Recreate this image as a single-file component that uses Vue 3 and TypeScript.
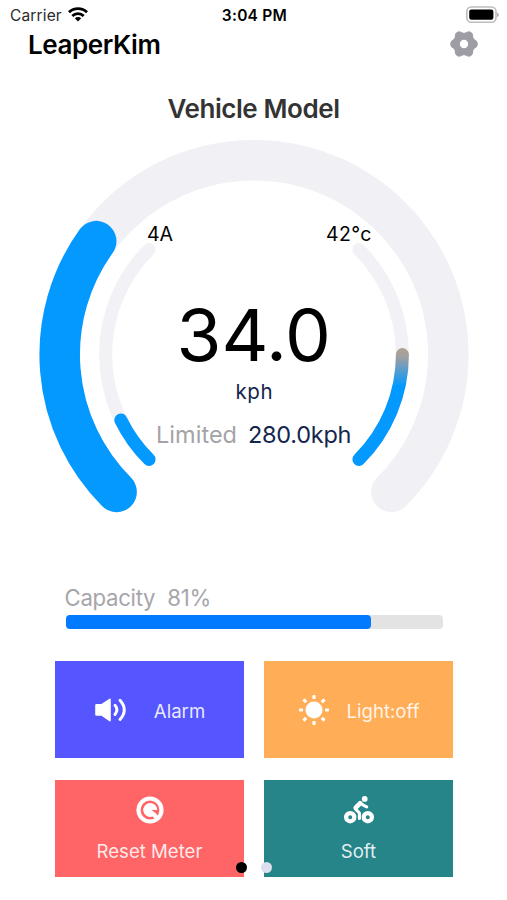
<script setup lang="ts">
interface Arc {
  from: number
  to: number
  radius: number
  stroke: string
  width: number
}

const cx = 254
const cy = 214.5

const capacity = 81

// Angles are in degrees, clockwise from the positive x axis.
function point(radius: number, deg: number): string {
  const a = (deg * Math.PI) / 180
  return `${(cx + radius * Math.cos(a)).toFixed(2)} ${(cy + radius * Math.sin(a)).toFixed(2)}`
}

function arcPath(arc: Arc): string {
  const large = arc.to - arc.from > 180 ? 1 : 0
  return `M${point(arc.radius, arc.from)}A${arc.radius} ${arc.radius} 0 ${large} 1 ${point(arc.radius, arc.to)}`
}

const arcs: Arc[] = [
  { from: 135, to: 405, radius: 194.3, stroke: '#f1f0f5', width: 40.5 },
  { from: 135, to: 215.7, radius: 194.3, stroke: '#0399ff', width: 40.5 },
  { from: 135, to: 225, radius: 148.4, stroke: '#f2f1f5', width: 13 },
  { from: 135, to: 153.8, radius: 148.4, stroke: '#0399ff', width: 13 },
  { from: -45, to: 45, radius: 148.4, stroke: '#f2f1f5', width: 13 },
  { from: 0, to: 45, radius: 148.4, stroke: 'url(#heat)', width: 13 },
]

const rays = [0, 45, 90, 135, 180, 225, 270, 315]
const teeth = [0, 60, 120, 180, 240, 300]
</script>

<template>
  <main class="screen">
    <div class="status">
      <div class="carrier">
        <span>Carrier</span>
        <svg class="wifi" viewBox="0 0 20 15" width="20" height="15">
          <g fill="none" stroke="#000" stroke-width="2.8">
            <path d="M1 5.3C6 .4 14 .4 19 5.3" />
            <path d="M4.3 8.9C7.5 5.8 12.5 5.8 15.7 8.9" />
          </g>
          <path d="M6.8 11.2Q10 8.6 13.2 11.2L10 14.6Z" fill="#000" />
        </svg>
      </div>
      <span class="clock">3:04 PM</span>
      <svg class="battery" viewBox="0 0 34 18" width="34" height="18">
        <rect x="1.8" y="1" width="29.2" height="15.2" rx="4.5" fill="#fff" stroke="#bdbdbd" stroke-width="1.6" />
        <rect x="4.2" y="3.4" width="24.2" height="10.4" rx="2.2" fill="#000" />
        <path d="M32.2 6.4Q33.8 7 33.8 8.7T32.2 11Z" fill="#a5a5a5" />
      </svg>
    </div>

    <header class="bar">
      <h1 class="brand">LeaperKim</h1>
      <svg class="gear" viewBox="-14 -14 28 28" width="28" height="28" fill="#9e9da5">
        <path
          fill-rule="evenodd"
          d="M-11.2 0a11.2 11.2 0 1 0 22.4 0a11.2 11.2 0 1 0 -22.4 0ZM-4.2 0a4.2 4.2 0 1 0 8.4 0a4.2 4.2 0 1 0 -8.4 0Z"
        />
        <path
          v-for="t in teeth"
          :key="t"
          d="M8 -6.2L12.2 -3.4Q13.8 -2.4 13.8 0T12.2 3.4L8 6.2Z"
          :transform="`rotate(${t})`"
        />
      </svg>
    </header>

    <h2 class="model">Vehicle Model</h2>

    <svg class="gauge" viewBox="0 0 507 380" width="507" height="380">
      <defs>
        <linearGradient id="heat" gradientUnits="userSpaceOnUse" x1="0" y1="209" x2="0" y2="246">
          <stop offset="0" stop-color="#b0a094" />
          <stop offset="0.2" stop-color="#a39f9f" />
          <stop offset="1" stop-color="#0399ff" />
        </linearGradient>
      </defs>
      <path
        v-for="(arc, i) in arcs"
        :key="i"
        :d="arcPath(arc)"
        fill="none"
        stroke-linecap="round"
        :stroke="arc.stroke"
        :stroke-width="arc.width"
      />
      <text class="small" x="147" y="100.6" textLength="26">4A</text>
      <text class="small" x="326" y="100.6" textLength="45.5">42°c</text>
      <text class="speed" x="176.5" y="221.3" textLength="154.5" lengthAdjust="spacingAndGlyphs">34.0</text>
      <text class="unit" x="235.5" y="258.5" textLength="37">kph</text>
      <text class="limit" x="156" y="303.3" textLength="81">Limited</text>
      <text class="limit value" x="248" y="303.3" textLength="103.5">280.0kph</text>
    </svg>

    <section class="capacity">
      <div class="caption"><span>Capacity</span><span>{{ capacity }}%</span></div>
      <div class="track"><div class="fill" :style="{ width: capacity + '%' }"></div></div>
    </section>

    <section class="tiles">
      <button class="tile alarm">
        <svg viewBox="0 0 32 24" width="32" height="24">
          <path d="M1.5 6H6.5L14.4.8Q15.8 0 15.8 1.7V22.3Q15.8 24 14.4 23.2L6.5 17.8H1.5Q.2 17.8 .2 16.5V7.3Q.2 6 1.5 6Z" fill="#fff" />
          <g fill="none" stroke="#fff" stroke-width="2.9" stroke-linecap="round">
            <path d="M20 7.3Q23.8 11.8 20 16.5" />
            <path d="M25 2.3Q33.5 11.9 25 21.5" />
          </g>
        </svg>
        <span>Alarm</span>
      </button>
      <button class="tile light">
        <svg viewBox="-15 -15 30 30" width="30" height="30" fill="#fff">
          <circle r="8.5" />
          <rect v-for="r in rays" :key="r" x="11" y="-1.6" width="4" height="3.2" rx=".8" :transform="`rotate(${r})`" />
        </svg>
        <span>Light:off</span>
      </button>
      <button class="tile column reset">
        <svg viewBox="-14 -14 28 28" width="28" height="28">
          <circle r="11.5" fill="none" stroke="#fff" stroke-width="4.2" />
          <path d="M1.5 0H7.2A7 7 0 1 0 2.6 6.5L5.5 9.5L9 7L6 3.6Z" fill="#fff" />
        </svg>
        <span>Reset Meter</span>
      </button>
      <button class="tile column soft">
        <svg viewBox="0 0 30 28" width="30" height="28">
          <g fill="none" stroke="#fff">
            <circle cx="6.2" cy="21.2" r="4.1" stroke-width="4.2" />
            <circle cx="23.8" cy="21.2" r="4.1" stroke-width="4.2" />
            <path d="M15.4 22.5V17L11.3 12.8L16.5 6.8L19.2 9.2L22.7 10.9" stroke-width="3.1" stroke-linecap="round" stroke-linejoin="round" />
            <path d="M11.8 11.6L16 7.4" stroke-width="4.8" stroke-linecap="round" />
          </g>
          <circle cx="20.7" cy="2.9" r="2.9" fill="#fff" />
        </svg>
        <span>Soft</span>
      </button>
      <div class="pager"><i class="dot active"></i><i class="dot"></i></div>
    </section>
  </main>
</template>

<style>
body {
  background: #fff;
}
</style>

<style scoped>
.screen {
  width: 507px;
  height: 900px;
  overflow: hidden;
  background: #fff;
  font-family: Inter, Roboto, sans-serif;
  color: #000;
}
.status {
  display: grid;
  grid-template-columns: 1fr auto 1fr;
  align-items: center;
  height: 30px;
  padding: 0 8px 0 10px;
  font-size: 15.5px;
  box-sizing: border-box;
}
.carrier {
  display: flex;
  align-items: center;
  gap: 6px;
  color: #2b2b2b;
  letter-spacing: 0.15px;
}
.wifi {
  margin-top: -1px;
}
.clock {
  font-weight: 600;
  font-size: 15.5px;
  letter-spacing: 0.25px;
}
.battery {
  justify-self: end;
  margin-top: -1px;
}
.bar {
  display: flex;
  align-items: center;
  justify-content: space-between;
  height: 28px;
  padding: 0 29px 0 28px;
}
.brand,
.model {
  margin: 0;
  font-size: 26px;
  font-weight: 600;
  letter-spacing: -0.43px;
  line-height: 29px;
}
.model {
  height: 46px;
  margin-top: 36px;
  text-align: center;
  line-height: 30px;
  color: #333;
}
.gauge {
  display: block;
}
.small {
  font-size: 19.5px;
}
.speed {
  font-size: 72px;
}
.unit {
  font-size: 20.5px;
  fill: #14264d;
}
.limit {
  font-size: 23.5px;
  fill: #a3a3a7;
}
.limit.value {
  fill: #14264d;
}
.capacity {
  width: 377.5px;
  margin: 62px 0 0 65.5px;
}
.caption {
  display: flex;
  gap: 12px;
  height: 33px;
  margin-left: -1px;
  line-height: 31px;
  font-size: 22.2px;
  letter-spacing: -0.3px;
  color: #a6a6aa;
}
.track {
  height: 14px;
  border-radius: 4px;
  background: #e3e3e4;
}
.fill {
  height: 14px;
  border-radius: 4px;
  background: #017aff;
}
.tiles {
  position: relative;
  display: grid;
  grid-template-columns: 189px 189px;
  grid-auto-rows: 97px;
  gap: 22px 20px;
  margin: 32px 0 0 55px;
  width: 398px;
}
.tile {
  display: flex;
  align-items: center;
  justify-content: center;
  padding: 0;
  border: 0;
  font: 400 18.6px/24px Inter, Roboto, sans-serif;
  color: rgba(255, 255, 255, 0.88);
}
.tile span {
  padding-top: 2px;
}
.alarm {
  gap: 27px;
  padding-left: 1px;
  background: #5556ff;
}
.light {
  gap: 17px;
  padding-left: 2px;
  background: #ffad56;
}
.column {
  flex-direction: column;
  gap: 13px;
  padding-top: 2px;
}
.reset {
  background: #ff6566;
}
.soft {
  background: #258589;
}
.pager {
  position: absolute;
  left: 181px;
  bottom: 4.5px;
  display: flex;
  gap: 14px;
}
.dot {
  width: 11px;
  height: 11px;
  border-radius: 50%;
  background: #dcdfee;
}
.dot.active {
  background: #000;
}
</style>
